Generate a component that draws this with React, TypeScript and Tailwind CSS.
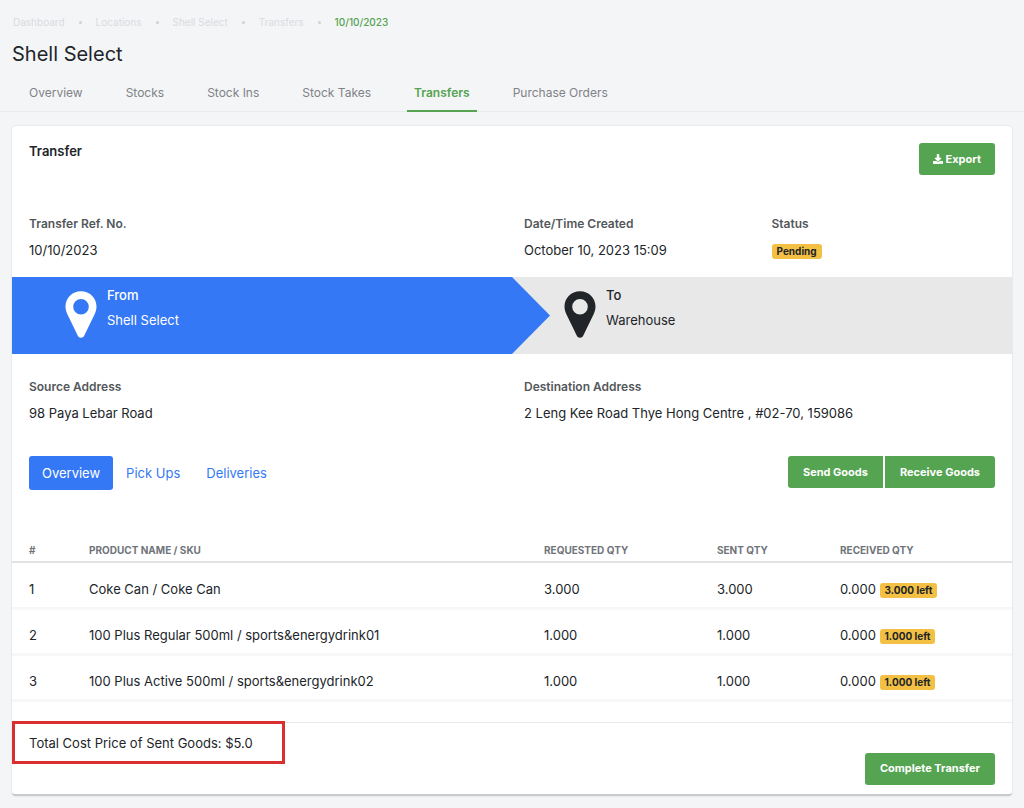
import { Fragment } from 'react';
import { FaDownload } from 'react-icons/fa';

const breadcrumbs = ['Dashboard', 'Locations', 'Shell Select', 'Transfers'];

const tabs = ['Overview', 'Stocks', 'Stock Ins', 'Stock Takes', 'Transfers', 'Purchase Orders'];

const items = [
  { id: 1, name: 'Coke Can / Coke Can', requested: '3.000', sent: '3.000', received: '0.000', left: '3.000 left' },
  { id: 2, name: '100 Plus Regular 500ml / sports&energydrink01', requested: '1.000', sent: '1.000', received: '0.000', left: '1.000 left' },
  { id: 3, name: '100 Plus Active 500ml / sports&energydrink02', requested: '1.000', sent: '1.000', received: '0.000', left: '1.000 left' },
];

const greenButton = 'h-8 bg-[#54a451] text-white text-[11px] font-bold flex items-center gap-[3px] whitespace-nowrap';

const Badge = ({ children }: { children: string }) => (
  <span className="inline-block h-[15px] px-[5px] rounded-[3px] bg-[#f3c043] text-[#212529] text-[10px] leading-[15px] font-bold">
    {children}
  </span>
);

const Field = ({ label, children }: { label: string; children: React.ReactNode }) => (
  <div>
    <dt className="text-[12px] leading-4 font-semibold text-[#53575b]">{label}</dt>
    <dd className="mt-2 text-[13px] leading-5 text-[#212529]">{children}</dd>
  </div>
);

const Marker = () => (
  <svg viewBox="0 0 32 48" className="w-8 h-12 shrink-0" fill="currentColor" aria-hidden="true">
    <path
      fillRule="evenodd"
      d="M16 0.3C7.2 0.3 0.5 7 0.5 15.6c0 3 0.7 5.2 2 8l10.2 21c0.7 1.5 1.8 2.2 3.3 2.2s2.6-0.7 3.3-2.2l10.2-21c1.3-2.8 2-5 2-8C31.5 7 24.8 0.3 16 0.3zM16 8a7.8 7.8 0 1 1 0 15.6a7.8 7.8 0 0 1 0-15.6z"
    />
  </svg>
);

const App = () => {
  return (
    <div className="min-h-screen bg-[#f4f5f7] pb-3 font-['Inter','Liberation_Sans',sans-serif] text-[#212529]">
      {/* Page header */}
      <header className="pt-[14px] border-b border-[#e9ebed]">
        <nav aria-label="Breadcrumb" className="flex items-center gap-[14px] px-[13px] text-[10px] leading-4">
          {breadcrumbs.map((crumb) => (
            <Fragment key={crumb}>
              <a href="#" className="text-[#d9dbdf]">{crumb}</a>
              <span className="w-[3px] h-[3px] rounded-full bg-[#cfd1d5]" />
            </Fragment>
          ))}
          <span className="font-medium text-[#54a451]">10/10/2023</span>
        </nav>
        <h1 className="mt-[10px] px-3 text-[20px] leading-7 font-normal">Shell Select</h1>
        <nav className="mt-[6px] -mb-px ml-[22px] flex gap-[29px]">
          {tabs.map((tab) => (
            <a
              key={tab}
              href="#"
              className={
                tab === 'Transfers'
                  ? 'h-[38px] px-[7px] pt-[11px] text-[12px] leading-4 font-semibold text-[#54a451] border-b-2 border-[#54a451]'
                  : 'h-[38px] px-[7px] pt-[11px] text-[12px] leading-4 text-[#7f8286]'
              }
            >
              {tab}
            </a>
          ))}
        </nav>
      </header>

      <main className="mt-[14px] mx-3 rounded bg-white border-b-2 border-[#c9cacc] shadow-[0_0_2px_rgba(0,0,0,0.15)]">
        <div className="flex justify-between items-start px-[17px] pt-[17px]">
          <h2 className="text-[13px] leading-4 font-semibold">Transfer</h2>
          <button className={`${greenButton} px-[14px] rounded-[3px]`}>
            <FaDownload className="w-[10px] h-[10px]" />
            Export
          </button>
        </div>

        <dl className="mt-[41px] grid grid-cols-4 pl-[17px] gap-x-[7px]">
          <div className="col-span-2">
            <Field label="Transfer Ref. No.">10/10/2023</Field>
          </div>
          <Field label="Date/Time Created">October 10, 2023 15:09</Field>
          <Field label="Status"><Badge>Pending</Badge></Field>
        </dl>

        {/* From / To banner */}
        <div className="mt-[17px] h-[77px] flex bg-[#e8e8e8] text-[13px] leading-[25px]">
          <div className="relative w-1/2 flex gap-[10px] pl-[53px] bg-[#3578f6] text-white">
            <div className="pt-[14px]"><Marker /></div>
            <div className="pt-[6px]">
              <p className="font-medium">From</p>
              <p>Shell Select</p>
            </div>
            <svg
              viewBox="0 0 38 77"
              preserveAspectRatio="none"
              className="absolute left-full top-0 h-full w-[38px]"
              fill="#3578f6"
              aria-hidden="true"
            >
              <path d="M0 0L38 38.5L0 77z" />
            </svg>
          </div>
          <div className="w-1/2 flex gap-[10px] pl-[52px]">
            <div className="pt-[14px]"><Marker /></div>
            <div className="pt-[6px]">
              <p className="font-medium">To</p>
              <p>Warehouse</p>
            </div>
          </div>
        </div>

        <dl className="mt-[25px] grid grid-cols-2 pl-[17px] gap-x-[7px]">
          <Field label="Source Address">98 Paya Lebar Road</Field>
          <Field label="Destination Address">2 Leng Kee Road Thye Hong Centre , #02-70, 159086</Field>
        </dl>

        <div className="mt-[33px] flex justify-between items-start px-[17px]">
          <div className="flex text-[13px] leading-[34px] text-[#3578f6]">
            <button className="px-[13px] rounded-[3px] bg-[#3578f6] text-white">Overview</button>
            <button className="px-[13px]">Pick Ups</button>
            <button className="px-[13px]">Deliveries</button>
          </div>
          <div className="flex gap-[2px]">
            <button className={`${greenButton} px-[15px] rounded-l-[3px]`}>Send Goods</button>
            <button className={`${greenButton} px-[15px] rounded-r-[3px]`}>Receive Goods</button>
          </div>
        </div>

        <table className="mt-12 w-full table-fixed text-left">
          <thead>
            <tr className="h-6 align-top border-b-2 border-[#e0e2e4] text-[10px] leading-4 uppercase text-[#6f747a]">
              <th className="w-[60px] pt-1 pl-[17px] font-bold">#</th>
              <th className="pt-1 pl-[17px] font-bold">Product Name / SKU</th>
              <th className="w-[173px] pt-1 pl-[17px] font-bold">Requested Qty</th>
              <th className="w-[123px] pt-1 pl-[17px] font-bold">Sent Qty</th>
              <th className="w-[189px] pt-1 pl-[17px] font-bold">Received Qty</th>
            </tr>
          </thead>
          <tbody>
            {items.map((item) => (
              <tr key={item.id} className="h-[46px] border-b-[3px] border-[#f7f7f8] text-[13px] leading-5">
                <td className="pl-[17px] pt-2">{item.id}</td>
                <td className="pl-[17px] pt-2">{item.name}</td>
                <td className="pl-[17px] pt-2">{item.requested}</td>
                <td className="pl-[17px] pt-2">{item.sent}</td>
                <td className="pl-[17px] pt-2">
                  {item.received} <Badge>{item.left}</Badge>
                </td>
              </tr>
            ))}
          </tbody>
        </table>

        <footer className="mt-5 border-t border-[#e6e8ea] flex justify-between items-start">
          <p className="-mt-[2px] w-[273px] h-[43px] border-[3px] border-[#d92f2f] pl-[14px] text-[13px] leading-[38px]">
            Total Cost Price of Sent Goods: $5.0
          </p>
          <button className={`${greenButton} px-[15px] rounded-[3px] mt-[30px] mr-[17px] mb-[9px]`}>Complete Transfer</button>
        </footer>
      </main>
    </div>
  );
};

export default App;
